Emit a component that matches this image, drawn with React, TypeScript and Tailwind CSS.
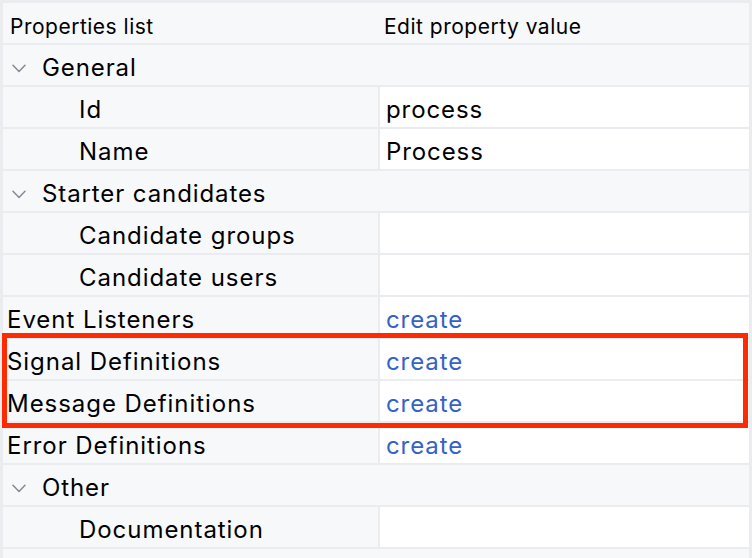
import React from 'react';

type Row =
  | { kind: 'group'; label: string }
  | { kind: 'prop'; label: string; value?: string; indent?: boolean; link?: boolean };

const rows: Row[] = [
  { kind: 'group', label: 'General' },
  { kind: 'prop', label: 'Id', value: 'process', indent: true },
  { kind: 'prop', label: 'Name', value: 'Process', indent: true },
  { kind: 'group', label: 'Starter candidates' },
  { kind: 'prop', label: 'Candidate groups', indent: true },
  { kind: 'prop', label: 'Candidate users', indent: true },
  { kind: 'prop', label: 'Event Listeners', value: 'create', link: true },
  { kind: 'prop', label: 'Signal Definitions', value: 'create', link: true },
  { kind: 'prop', label: 'Message Definitions', value: 'create', link: true },
  { kind: 'prop', label: 'Error Definitions', value: 'create', link: true },
  { kind: 'group', label: 'Other' },
  { kind: 'prop', label: 'Documentation', indent: true },
];

function Chevron() {
  return (
    <svg width="14" height="9" viewBox="0 0 14 9" className="shrink-0">
      <path d="M1 1.2 L7 7.5 L13 1.2" fill="none" stroke="#878a94" strokeWidth="1.5" strokeLinecap="round" strokeLinejoin="round" />
    </svg>
  );
}

export default function App() {
  return (
    <div
      className="relative w-[752px] h-[558px] overflow-hidden bg-[#ebecf0] pt-[3px] pl-[3px] pr-[3px] text-black"
      style={{ fontFamily: 'Inter, "Noto Sans", sans-serif' }}
    >
      <div className="grid grid-cols-[375px_1fr] gap-x-[2px] gap-y-[2px]">
        <div className="h-[40px] bg-[#f7f8fa] flex items-center pt-[7px] pl-[7px] text-[21px] tracking-[0.5px]">Properties list</div>
        <div className="h-[40px] bg-[#f7f8fa] -ml-[2px] pl-[6px] pt-[7px] flex items-center text-[21px] tracking-[0.5px]">Edit property value</div>

        {rows.map((row, i) =>
          row.kind === 'group' ? (
            <div key={i} className="col-span-2 h-[40px] bg-[#f7f8fa] flex items-center pt-[6px] pl-[9px] gap-[16px] text-[24px] tracking-[0.9px]">
              <Chevron />
              <span>{row.label}</span>
            </div>
          ) : (
            <React.Fragment key={i}>
              <div className={`h-[40px] bg-[#f7f8fa] flex items-center pt-[6px] text-[24px] tracking-[0.95px] ${row.indent ? 'pl-[76px]' : 'pl-[4px]'}`}>
                {row.label}
              </div>
              <div className={`h-[40px] bg-white flex items-center pt-[6px] pl-[6px] text-[24px] tracking-[0.9px] ${row.link ? 'text-[#3462c6]' : ''}`}>
                {row.value}
              </div>
            </React.Fragment>
          )
        )}
        <div className="col-span-2 h-[20px] bg-[#f7f8fa]" />
      </div>

      <div className="absolute left-[2px] top-[333px] w-[746px] h-[95px] border-[5px] border-[#ff2a00] pointer-events-none" />
    </div>
  );
}
